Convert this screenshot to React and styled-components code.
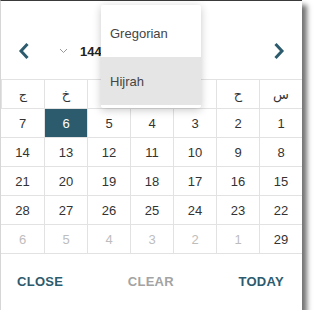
import styled, { createGlobalStyle } from "styled-components";

const Global = createGlobalStyle`
  body {
    margin: 0;
    background: #fff;
    font-family: "Liberation Sans", Arial, sans-serif;
  }
`;

const teal = "#2d5b6e";

const Panel = styled.div`
  position: relative;
  width: 301px;
  height: 309px;
  background: #fff;
  border-top: 1px solid #3a3a3a;
  border-left: 1px solid #d6d6d6;
  box-shadow: 5px 5px 5px rgba(0, 0, 0, 0.55);
  display: flex;
  flex-direction: column;
`;

const Header = styled.div`
  height: 78px;
  display: flex;
  align-items: center;
  padding: 22px 16px 0 16px;
  box-sizing: border-box;
`;

const NavButton = styled.button`
  border: 0;
  background: none;
  padding: 0;
  width: 14px;
  height: 20px;
  display: flex;
  align-items: center;
  justify-content: center;
  cursor: pointer;
`;

const Title = styled.div`
  flex: 1;
  display: flex;
  align-items: center;
  padding-left: 28px;
  gap: 10px;
  font-size: 13px;
  font-weight: bold;
  color: #222;
`;

const Caret = styled.span`
  display: flex;
  align-items: center;
  margin-right: 2px;
`;

const Grid = styled.div`
  display: grid;
  grid-template-columns: repeat(7, 43px);
  direction: rtl;
  border-top: 1px solid #e2e2e2;
`;

const DayName = styled.div`
  height: 28px;
  display: flex;
  align-items: center;
  justify-content: center;
  border-left: 1px solid #e2e2e2;
  border-bottom: 1px solid #e2e2e2;
  font-family: "DejaVu Sans", "Noto Sans", sans-serif;
  font-size: 13px;
  color: #333;
  &:last-child { border-left: 0; }
`;

const Cell = styled.div`
  height: 28px;
  display: flex;
  align-items: center;
  justify-content: center;
  border-left: 1px solid #e2e2e2;
  border-bottom: 1px solid #e2e2e2;
  font-size: 13px;
  color: ${p => (p.$selected ? "#fff" : p.$muted ? "#bdbdbd" : "#333")};
  background: ${p => (p.$selected ? teal : "transparent")};
  &:nth-child(7n) { border-left: 0; }
`;

const Footer = styled.div`
  flex: 1;
  display: flex;
  align-items: center;
  justify-content: space-between;
  padding: 0 18px 0 16px;
`;

const FooterButton = styled.button`
  border: 0;
  background: none;
  padding: 0;
  font-family: "Liberation Sans", Arial, sans-serif;
  font-size: 13px;
  font-weight: bold;
  letter-spacing: 0.3px;
  color: ${p => (p.$disabled ? "#a3a3a3" : teal)};
  margin-bottom: 1px;
`;

const Menu = styled.ul`
  position: absolute;
  left: 100px;
  top: 4px;
  width: 100px;
  margin: 0;
  padding: 4px 0 3px;
  list-style: none;
  background: #fff;
  border-radius: 2px;
  box-shadow: 0 2px 8px rgba(0, 0, 0, 0.22);
`;

const MenuItem = styled.li`
  height: 48px;
  display: flex;
  align-items: center;
  padding: 0 9px;
  font-size: 13px;
  color: #444;
  background: ${p => (p.$active ? "#e5e5e5" : "transparent")};
`;

const Chevron = ({ dir }) => (
  <svg width="12" height="18" viewBox="0 0 12 18">
    <path
      d={dir === "left" ? "M9.5 2 L3 9 L9.5 16" : "M2.5 2 L9 9 L2.5 16"}
      fill="none"
      stroke={teal}
      strokeWidth="3"
    />
  </svg>
);

const dayNames = ["س", "ح", "ن", "ث", "ر", "خ", "ج"];

const weeks = [
  [1, 2, 3, 4, 5, 6, 7],
  [8, 9, 10, 11, 12, 13, 14],
  [15, 16, 17, 18, 19, 20, 21],
  [22, 23, 24, 25, 26, 27, 28],
];

export default function App() {
  return (
    <>
      <Global />
      <Panel>
        <Header>
          <NavButton><Chevron dir="left" /></NavButton>
          <Title>
            <Caret>
              <svg width="9" height="6" viewBox="0 0 9 6">
                <path d="M1 1 L4.5 4.5 L8 1" fill="none" stroke="#999" strokeWidth="1" />
              </svg>
            </Caret>
            <span>1446</span>
            <span dir="rtl">ربيع الآخر</span>
          </Title>
          <NavButton><Chevron dir="right" /></NavButton>
        </Header>
        <Grid>
          {dayNames.map(d => <DayName key={d}>{d}</DayName>)}
          {weeks.flat().map(n => (
            <Cell key={n} $selected={n === 6}>{n}</Cell>
          ))}
          <Cell>29</Cell>
          {[1, 2, 3, 4, 5, 6].map(n => <Cell key={"n" + n} $muted>{n}</Cell>)}
        </Grid>
        <Footer>
          <FooterButton>CLOSE</FooterButton>
          <FooterButton $disabled>CLEAR</FooterButton>
          <FooterButton>TODAY</FooterButton>
        </Footer>
        <Menu>
          <MenuItem>Gregorian</MenuItem>
          <MenuItem $active>Hijrah</MenuItem>
        </Menu>
      </Panel>
    </>
  );
}
